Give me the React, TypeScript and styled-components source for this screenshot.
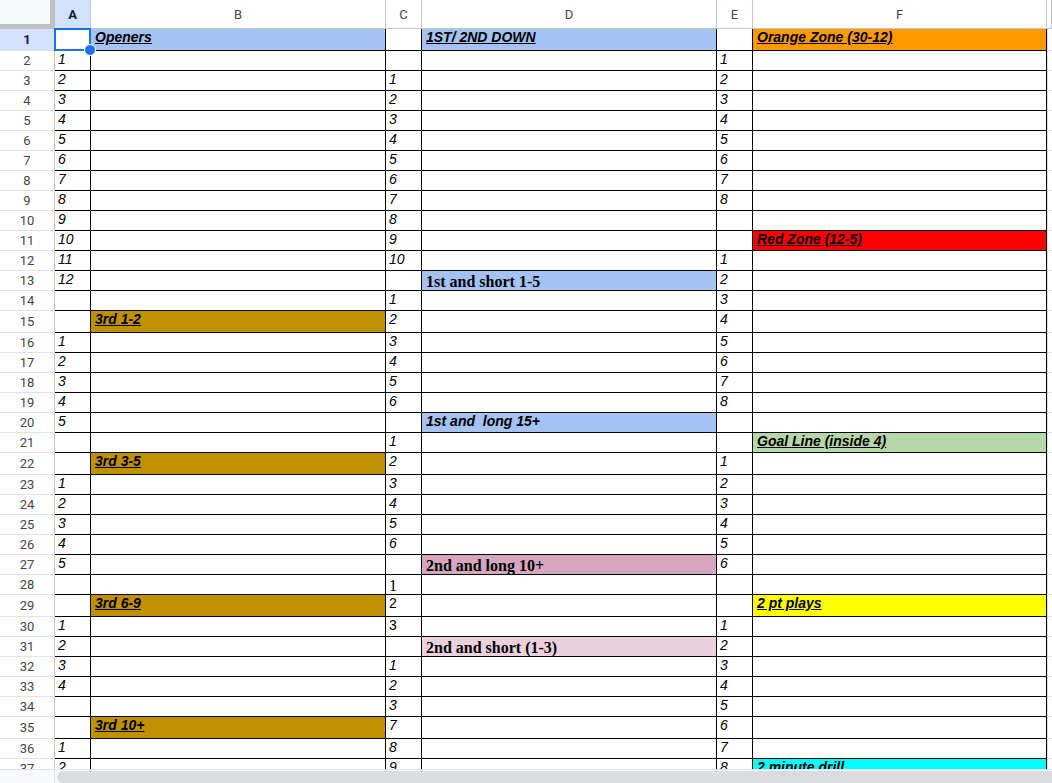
import React from 'react';
import styled, { createGlobalStyle, css } from 'styled-components';

type Col = 'A' | 'B' | 'C' | 'D' | 'E' | 'F';
type Kind = 'num' | 'plainNum' | 'head' | 'headPlain' | 'serif' | 'serifNum';

interface CellSpec {
  text: string;
  kind: Kind;
  fill?: string;
}

const COLS: Col[] = ['A', 'B', 'C', 'D', 'E', 'F'];
const TEMPLATE = '55px 36px 295px 36px 295px 36px 294px 1fr';
const TALL_ROWS = [1, 15, 22, 29, 35];

const BLUE = '#a4c2f4';
const GOLD = '#bf9000';

const GlobalStyle = createGlobalStyle`
  html, body {
    margin: 0;
    padding: 0;
    background: #fff;
    overflow: hidden;
  }
  body {
    font-family: "Liberation Sans", Arial, sans-serif;
  }
`;

const Sheet = styled.div`
  width: 1052px;
  height: 783px;
  display: flex;
  flex-direction: column;
  overflow: hidden;
`;

const Body = styled.div`
  height: 770px;
  overflow: hidden;
`;

const HeaderRow = styled.div`
  display: grid;
  grid-template-columns: ${TEMPLATE};
  height: 29px;
`;

const Corner = styled.div`
  background: #f8f9fa;
  border-right: 5px solid #c0c0c0;
  border-bottom: 5px solid #c0c0c0;
  box-sizing: border-box;
`;

const ColHead = styled.div<{ $active?: boolean }>`
  box-sizing: border-box;
  border-right: 1px solid #c4c7c5;
  border-bottom: 1px solid #c4c7c5;
  display: flex;
  align-items: center;
  justify-content: center;
  font-family: Roboto, "Liberation Sans", Arial, sans-serif;
  font-size: 13px;
  color: #444746;
  background: ${({ $active }) => ($active ? '#d3e3fd' : '#fff')};
  ${({ $active }) =>
    $active &&
    css`
      font-weight: 700;
      color: #041e49;
    `}
`;

const Row = styled.div<{ $h: number }>`
  display: grid;
  grid-template-columns: ${TEMPLATE};
  height: ${({ $h }) => $h}px;
`;

const RowHead = styled.div<{ $active?: boolean }>`
  box-sizing: border-box;
  border-right: 1px solid #c4c7c5;
  border-bottom: 1px solid #e1e3e1;
  display: flex;
  align-items: center;
  justify-content: center;
  font-family: Roboto, "Liberation Sans", Arial, sans-serif;
  font-size: 13px;
  color: #444746;
  background: ${({ $active }) => ($active ? '#d3e3fd' : '#fff')};
  ${({ $active }) =>
    $active &&
    css`
      font-weight: 700;
      color: #041e49;
    `}
`;

const kindStyles: Record<Kind, ReturnType<typeof css>> = {
  num: css`
    font-style: italic;
    font-size: 14px;
    line-height: 16px;
  `,
  plainNum: css`
    font-size: 14px;
    line-height: 16px;
  `,
  head: css`
    font-style: italic;
    font-weight: 700;
    font-size: 14px;
    line-height: 16px;
    text-decoration: underline;
    text-underline-offset: 1px;
    padding-left: 4px;
  `,
  headPlain: css`
    font-style: italic;
    font-weight: 700;
    font-size: 14px;
    line-height: 16px;
    padding-left: 4px;
  `,
  serif: css`
    font-family: "Liberation Serif", "Times New Roman", serif;
    font-weight: 700;
    font-size: 16px;
    line-height: 17px;
    padding-top: 2px;
    padding-left: 4px;
  `,
  serifNum: css`
    font-family: "Liberation Serif", "Times New Roman", serif;
    font-size: 16px;
    line-height: 17px;
    padding-top: 2px;
  `,
};

const Cell = styled.div<{ $fill?: string; $kind?: Kind; $selected?: boolean }>`
  position: relative;
  box-sizing: border-box;
  border-right: 1px solid #000;
  border-bottom: 1px solid #000;
  background: ${({ $fill }) => $fill || '#fff'};
  padding: 0 3px;
  color: #000;
  white-space: pre;
  overflow: ${({ $selected }) => ($selected ? 'visible' : 'hidden')};
  font-size: 14px;
  line-height: 16px;
  ${({ $kind }) => ($kind ? kindStyles[$kind] : '')}
`;

const Spare = styled.div`
  box-sizing: border-box;
  border-left: 1px solid #e1e3e1;
  border-bottom: 1px solid #e1e3e1;
  background: #fff;
`;

const Selection = styled.div`
  position: absolute;
  left: -1px;
  top: -1px;
  right: -1px;
  bottom: -1px;
  border: 2px solid #1a73e8;
  z-index: 2;
  pointer-events: none;
`;

const FillHandle = styled.div`
  position: absolute;
  right: -7px;
  bottom: -7px;
  width: 10px;
  height: 10px;
  border-radius: 50%;
  background: #1a73e8;
  border: 1px solid #fff;
`;

const ScrollBar = styled.div`
  display: grid;
  grid-template-columns: 55px 1fr;
  height: 13px;
  border-top: 1px solid #e1e3e1;
  background: #f8f9fa;
`;

const ScrollCorner = styled.div`
  border-right: 1px solid #e1e3e1;
  background: #f8f9fa;
`;

const Track = styled.div`
  padding: 1px 0 0 2px;
`;

const Thumb = styled.div`
  height: 12px;
  border-radius: 6px 0 0 6px;
  background: #dadce0;
`;

const cells: Record<number, Partial<Record<Col, CellSpec>>> = {};

const put = (row: number, col: Col, spec: CellSpec) => {
  cells[row] = { ...(cells[row] || {}), [col]: spec };
};

const seq = (col: Col, startRow: number, count: number, first = 1) => {
  for (let i = 0; i < count; i++) {
    put(startRow + i, col, { text: String(first + i), kind: 'num' });
  }
};

// column A
seq('A', 2, 12);
seq('A', 16, 5);
seq('A', 23, 5);
seq('A', 30, 4);
seq('A', 36, 2);

// column C
seq('C', 3, 10);
seq('C', 14, 6);
seq('C', 21, 6);
put(28, 'C', { text: '1', kind: 'serifNum' });
put(29, 'C', { text: '2', kind: 'plainNum' });
put(30, 'C', { text: '3', kind: 'plainNum' });
seq('C', 32, 3);
seq('C', 35, 3, 7);

// column E
seq('E', 2, 8);
seq('E', 12, 8);
seq('E', 22, 6);
seq('E', 30, 8);

// section headers
put(1, 'B', { text: 'Openers', kind: 'head', fill: BLUE });
put(1, 'D', { text: '1ST/ 2ND DOWN', kind: 'head', fill: BLUE });
put(1, 'F', { text: 'Orange Zone (30-12)', kind: 'head', fill: '#ff9900' });
put(11, 'F', { text: 'Red Zone (12-5)', kind: 'head', fill: '#ff0000' });
put(13, 'D', { text: '1st and short 1-5', kind: 'serif', fill: BLUE });
put(15, 'B', { text: '3rd 1-2', kind: 'head', fill: GOLD });
put(20, 'D', { text: '1st and  long 15+', kind: 'headPlain', fill: BLUE });
put(21, 'F', { text: 'Goal Line (inside 4)', kind: 'head', fill: '#b6d7a8' });
put(22, 'B', { text: '3rd 3-5', kind: 'head', fill: GOLD });
put(27, 'D', { text: '2nd and long 10+', kind: 'serif', fill: '#d5a6bd' });
put(29, 'B', { text: '3rd 6-9', kind: 'head', fill: GOLD });
put(29, 'F', { text: '2 pt plays', kind: 'head', fill: '#ffff00' });
put(31, 'D', { text: '2nd and short (1-3)', kind: 'serif', fill: '#ead1dc' });
put(35, 'B', { text: '3rd 10+', kind: 'head', fill: GOLD });
put(37, 'F', { text: '2 minute drill', kind: 'head', fill: '#00ffff' });

const rowNumbers = Array.from({ length: 37 }, (_, i) => i + 1);

export default function App() {
  return (
    <Sheet>
      <GlobalStyle />
      <Body>
        <HeaderRow>
          <Corner />
          {COLS.map((c) => (
            <ColHead key={c} $active={c === 'A'}>
              {c}
            </ColHead>
          ))}
          <ColHead />
        </HeaderRow>
        {rowNumbers.map((r) => (
          <Row key={r} $h={TALL_ROWS.includes(r) ? 22 : 20}>
            <RowHead $active={r === 1}>{r}</RowHead>
            {COLS.map((c) => {
              const spec = cells[r]?.[c];
              const selected = r === 1 && c === 'A';
              return (
                <Cell key={c} $fill={spec?.fill} $kind={spec?.kind} $selected={selected}>
                  {spec?.text}
                  {selected && (
                    <Selection>
                      <FillHandle />
                    </Selection>
                  )}
                </Cell>
              );
            })}
            <Spare />
          </Row>
        ))}
      </Body>
      <ScrollBar>
        <ScrollCorner />
        <Track>
          <Thumb />
        </Track>
      </ScrollBar>
    </Sheet>
  );
}
